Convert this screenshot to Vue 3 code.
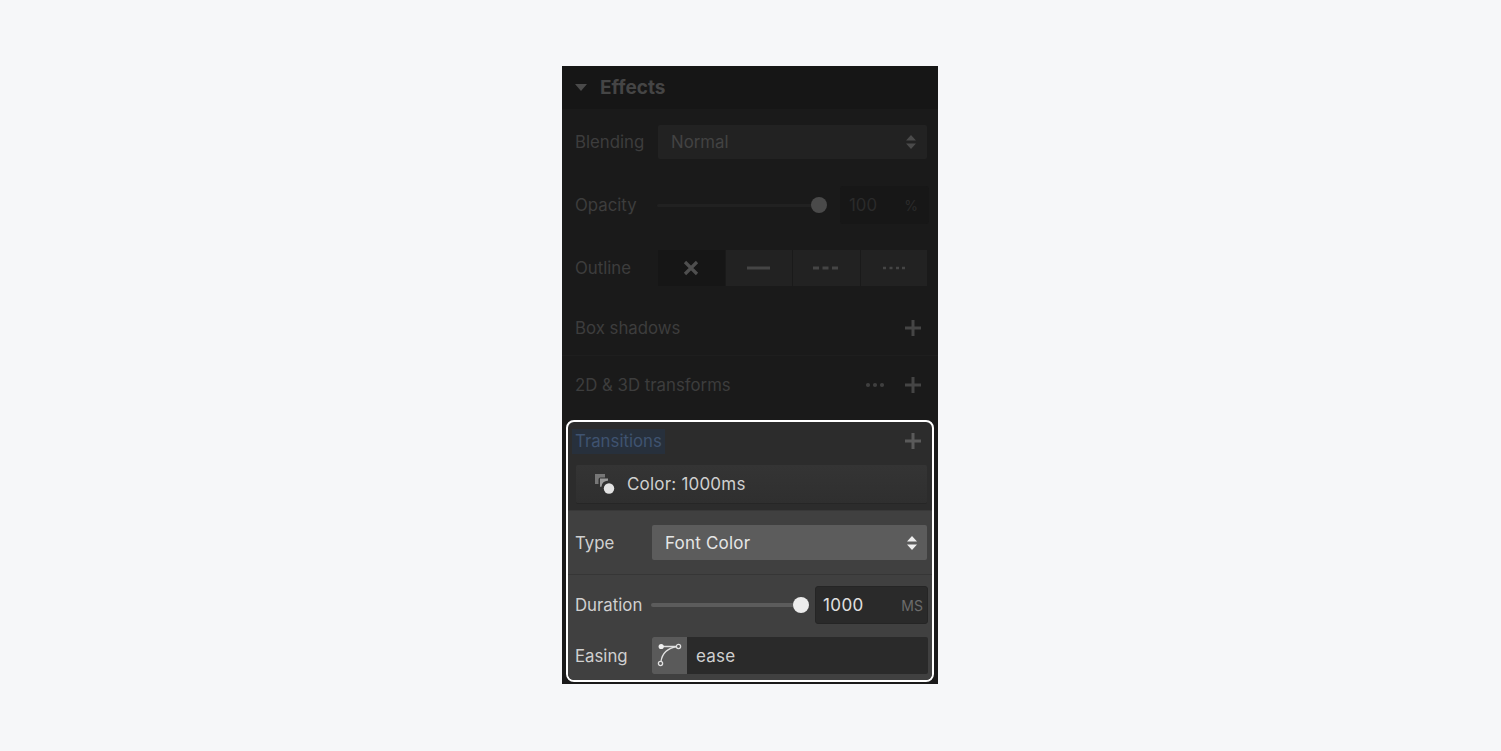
<script setup>
const outlineOptions = ['none', 'solid', 'dashed', 'dotted']
</script>

<template>
  <main class="page">
    <section class="panel">
      <header class="head">
        <svg class="caret" width="12" height="7" viewBox="0 0 12 7"><path d="M0 0h12L6 7z" fill="#4a4a4a" /></svg>
        <span>Effects</span>
      </header>

      <div class="row blending">
        <span class="label">Blending</span>
        <div class="select dim-select">
          <span>Normal</span>
          <svg width="10" height="14" viewBox="0 0 10 14"><path d="M5 0l5 5.500H0zM5 14l5-5.500H0z" fill="#4a4a4a" /></svg>
        </div>
      </div>

      <div class="row opacity">
        <span class="label">Opacity</span>
        <div class="slider dim-slider"><i class="knob"></i></div>
        <div class="num dim-num"><span>100</span><small>%</small></div>
      </div>

      <div class="row outline">
        <span class="label">Outline</span>
        <div class="segments">
          <div v-for="o in outlineOptions" :key="o" class="segment" :class="{ active: o === 'none' }">
            <svg v-if="o === 'none'" width="16" height="16" viewBox="0 0 16 16"><path d="M2 2l12 12M14 2L2 14" stroke="#4f4f4f" stroke-width="3.200" /></svg>
            <svg v-else-if="o === 'solid'" width="24" height="4" viewBox="0 0 24 4"><path d="M0 2h23" stroke="#454545" stroke-width="3" /></svg>
            <svg v-else-if="o === 'dashed'" width="26" height="4" viewBox="0 0 26 4"><path d="M0 2h6M9.500 2h6M19 2h6" stroke="#454545" stroke-width="3" /></svg>
            <svg v-else width="24" height="4" viewBox="0 0 24 4"><path d="M1 2h3M7.500 2h3M14 2h3M20 2h3" stroke="#454545" stroke-width="2.400" /></svg>
          </div>
        </div>
      </div>

      <div class="row shadows">
        <span class="label">Box shadows</span>
        <svg class="plus" width="16" height="16" viewBox="0 0 16 16"><path d="M8 0v16M0 8h16" stroke="#454545" stroke-width="3" /></svg>
      </div>

      <div class="row transforms">
        <span class="label">2D &amp; 3D transforms</span>
        <svg class="more" width="20" height="6" viewBox="0 0 20 6"><circle cx="3" cy="3" r="2.100" fill="#3f3f3f" /><circle cx="10" cy="3" r="2.100" fill="#3f3f3f" /><circle cx="17" cy="3" r="2.100" fill="#3f3f3f" /></svg>
        <svg class="plus" width="16" height="16" viewBox="0 0 16 16"><path d="M8 0v16M0 8h16" stroke="#454545" stroke-width="3" /></svg>
      </div>

      <div class="spot">
        <div class="trans-head">
          <span class="selected">Transitions</span>
          <svg class="plus lift" width="16" height="16" viewBox="0 0 16 16"><path d="M8 0v16M0 8h16" stroke="#5a5a5a" stroke-width="3" /></svg>
        </div>

        <div class="item">
          <svg width="20" height="20" viewBox="0 0 20 20">
            <path d="M0 0h10v3.500H5.500a2 2 0 0 0-2 2V10H0z" fill="#777" />
            <path d="M5 4.500h8v2.200a6 6 0 0 0-6.500 6H5z" fill="#999" />
            <circle cx="14" cy="14.500" r="5.200" fill="#e2e2e2" />
          </svg>
          <span>Color: 1000ms</span>
        </div>

        <div class="detail">
          <div class="type-row">
            <span class="bright-label">Type</span>
            <div class="select font-select">
              <span>Font Color</span>
              <svg width="10" height="14" viewBox="0 0 10 14"><path d="M5 0l5 5.500H0zM5 14l5-5.500H0z" fill="#eee" /></svg>
            </div>
          </div>
          <div class="duration-row">
            <span class="bright-label">Duration</span>
            <div class="slider bright-slider"><i class="knob white"></i></div>
            <div class="num dark-num"><span>1000</span><small>MS</small></div>
          </div>
          <div class="easing-row">
            <span class="bright-label">Easing</span>
            <div class="easing">
              <div class="curve">
                <svg width="26" height="26" viewBox="0 0 26 26" fill="none">
                  <path d="M4 18.500C5 11 9 5.500 20 3.500" stroke="#e0e0e0" stroke-width="1.300" />
                  <path d="M4 3.500L20 3.500" stroke="#e0e0e0" stroke-width="1.300" />
                  <circle cx="4.200" cy="3.500" r="2.600" fill="#f0f0f0" />
                  <circle cx="21.500" cy="3.500" r="2.100" stroke="#e0e0e0" stroke-width="1.300" fill="#5a5a5a" />
                  <circle cx="3.500" cy="20.500" r="2.100" stroke="#e0e0e0" stroke-width="1.300" fill="#5a5a5a" />
                </svg>
              </div>
              <span>ease</span>
            </div>
          </div>
        </div>
      </div>
    </section>
  </main>
</template>

<style>
html, body { margin: 0; background: #f6f7f9; }
</style>

<style scoped>
.page {
  height: 751px;
  box-sizing: border-box;
  padding: 66px 1px 0 0;
  display: flex;
  justify-content: center;
  background: #f6f7f9;
  font-family: Inter, "Liberation Sans", sans-serif;
  font-size: 16.800px;
  overflow: hidden;
}
.panel {
  width: 376px;
  height: 618px;
  background: #1a1a1a;
  color: #3f3f3f;
  box-sizing: border-box;
}
.head {
  height: 43px;
  box-sizing: border-box;
  padding: 0 0 1px 13px;
  background: #161616;
  display: flex;
  align-items: center;
  gap: 13px;
  font-size: 19px;
  font-weight: 700;
  color: #454545;
}
.row {
  display: flex;
  align-items: center;
  padding: 0 11px 0 13px;
}
.label { color: #3d3d3d; }
.blending { height: 34px; margin-top: 16px; }
.select {
  display: flex;
  align-items: center;
  justify-content: space-between;
  box-sizing: border-box;
  border-radius: 2px;
}
.dim-select {
  margin-left: auto;
  width: 269px;
  height: 34px;
  padding: 0 11px 0 13px;
  background: #222;
  color: #434343;
}
.opacity { height: 38px; margin-top: 27px; padding-right: 9px; }
.slider { position: relative; height: 3px; border-radius: 2px; }
.dim-slider {
  width: 162px;
  margin-left: 20px;
  background: #212121;
}
.knob {
  position: absolute;
  right: -8px;
  top: -6.500px;
  width: 16px;
  height: 16px;
  border-radius: 50%;
  background: #4a4a4a;
}
.num {
  display: flex;
  align-items: center;
  justify-content: space-between;
  box-sizing: border-box;
  border-radius: 3px;
}
.dim-num {
  margin-left: auto;
  width: 89px;
  height: 38px;
  padding: 0 11px 0 9px;
  background: #171717;
  color: #2b2b2b;
}
.dim-num small { font-size: 14px; }
.outline { height: 36px; margin-top: 26px; }
.segments {
  margin-left: auto;
  width: 269px;
  height: 36px;
  display: flex;
  gap: 1px;
}
.segment {
  flex: 1;
  background: #222;
  display: flex;
  align-items: center;
  justify-content: center;
}
.segment.active { background: #161616; }
.shadows { height: 56px; margin-top: 14px; border-bottom: 1px solid #1e1e1e; box-sizing: border-box; }
.shadows .plus, .transforms .plus { margin-left: auto; margin-right: 6px; }
.transforms { height: 57px; }
.transforms .more { margin-left: auto; }
.transforms .plus { margin-left: 20px; }
.spot {
  margin: 7px 4px 0;
  height: 262px;
  box-sizing: border-box;
  border: 2px solid #fff;
  border-radius: 8px;
  background: #2c2c2c;
  overflow: hidden;
}
.trans-head {
  height: 39px;
  display: flex;
  align-items: center;
  justify-content: space-between;
  padding: 0 11px 0 4px;
}
.lift { margin-bottom: 2px; }
.selected {
  color: #3f5370;
  background: #27303c;
  padding: 2px 3px;
  line-height: 21px;
}
.item {
  margin: 4px 5px 0 8px;
  height: 38px;
  box-sizing: border-box;
  padding-left: 19px;
  display: flex;
  align-items: center;
  gap: 12px;
  background: linear-gradient(#343434, #2f2f2f);
  border-radius: 2px;
  box-shadow: 0 1px 0 #262626;
  color: #cfcfcf;
  font-size: 17px;
  letter-spacing: 0.2px;
}
.detail {
  margin-top: 7px;
  background: #404040;
  height: 171px;
  color: #e0e0e0;
  border-top: 1px solid #383838;
}
.bright-label { color: #d0d0d0; }
.type-row {
  height: 64px;
  box-sizing: border-box;
  border-bottom: 1px solid #363636;
  display: flex;
  align-items: center;
  padding: 0 5px 0 7px;
}
.font-select {
  margin-left: auto;
  width: 275px;
  height: 35px;
  padding: 0 10px 0 13px;
  background: #5c5c5c;
  color: #e6e6e6;
  font-size: 17px;
  letter-spacing: 0.2px;
}
.duration-row {
  height: 38px;
  margin-top: 11px;
  display: flex;
  align-items: center;
  padding: 0 4px 0 7px;
}
.bright-slider {
  width: 150px;
  margin-left: 9px;
  height: 4px;
  background: #5c5c5c;
}
.white { background: #ececec; top: -6px; }
.dark-num {
  margin-left: auto;
  width: 113px;
  height: 38px;
  padding: 0 4px 0 7px;
  background: #2a2a2a;
  border: 1px solid #252525;
  color: #e0e0e0;
  font-size: 17px;
  letter-spacing: 0.4px;
}
.dark-num small { font-size: 14px; color: #6c6c6c; letter-spacing: 0; }
.easing-row {
  height: 37px;
  margin-top: 13px;
  display: flex;
  align-items: center;
  padding: 0 4px 0 7px;
}
.easing {
  margin-left: auto;
  width: 276px;
  height: 37px;
  display: flex;
  align-items: center;
  background: #2a2a2a;
  border-radius: 2px;
  color: #d0d0d0;
  font-size: 17px;
  letter-spacing: 0.2px;
}
.curve {
  width: 35px;
  height: 100%;
  background: #5a5a5a;
  display: flex;
  align-items: center;
  justify-content: center;
  margin-right: 9px;
  border-radius: 2px 0 0 2px;
}
</style>
